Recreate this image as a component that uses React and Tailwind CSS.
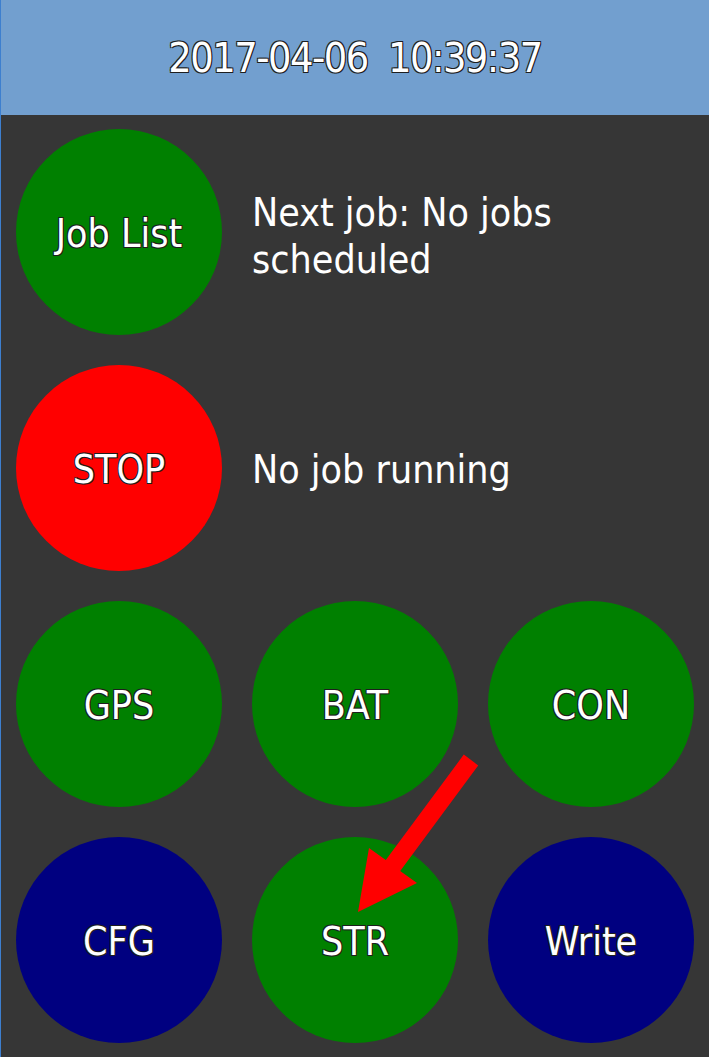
import React from 'react';

const outline =
    '[text-shadow:1px_1px_0_#1e1e1e,-1px_-1px_0_#1e1e1e,1px_-1px_0_#1e1e1e,-1px_1px_0_#1e1e1e]';

const Circle = ({ label, color }) => (
    <div
        className={`w-[206px] h-[206px] rounded-full flex items-center justify-center pt-[5px] text-white text-[39px] ${color} ${outline}`}
    >
        {label}
    </div>
);

const App = () => {
    return (
        <div
            className="relative w-[709px] h-[1057px] overflow-hidden border-l border-[#3d7fcf] bg-[#363636] flex flex-col"
            style={{ fontFamily: '"DejaVu Sans Condensed", "DejaVu Sans", sans-serif', fontStretch: 'condensed' }}
        >
            {/* clock header */}
            <div className="h-[115px] shrink-0 bg-[#729fcf] flex items-center justify-center pt-[3px]">
                <span className={`text-white text-[41px] tracking-[-1.5px] whitespace-pre ${outline}`}>
                    2017-04-06  10:39:37
                </span>
            </div>

            {/* buttons */}
            <div className="pt-[14px] pl-[15px] grid grid-cols-[206px_206px_206px] gap-[30px]">
                <Circle label="Job List" color="bg-[#008000]" />
                <div className="col-span-2 flex items-center text-white text-[39px] leading-[47px] pt-[8px]">
                    Next job: No jobs<br />scheduled
                </div>

                <Circle label="STOP" color="bg-[#ff0000]" />
                <div className="col-span-2 flex items-center text-white text-[39px] pt-[5px]">
                    No job running
                </div>

                <Circle label="GPS" color="bg-[#008000]" />
                <Circle label="BAT" color="bg-[#008000]" />
                <Circle label="CON" color="bg-[#008000]" />

                <Circle label="CFG" color="bg-[#000080]" />
                <Circle label="STR" color="bg-[#008000]" />
                <Circle label="Write" color="bg-[#000080]" />
            </div>

            {/* red pointer arrow */}
            <svg className="absolute left-0 top-0 pointer-events-none" width="709" height="1057" viewBox="0 0 709 1057">
                <polygon
                    fill="#ff0000"
                    points="462.8,754.6 477.2,765.4 399.2,870.9 416,883 357,912 368,848 384.8,860.1"
                />
            </svg>
        </div>
    );
};

export default App;
